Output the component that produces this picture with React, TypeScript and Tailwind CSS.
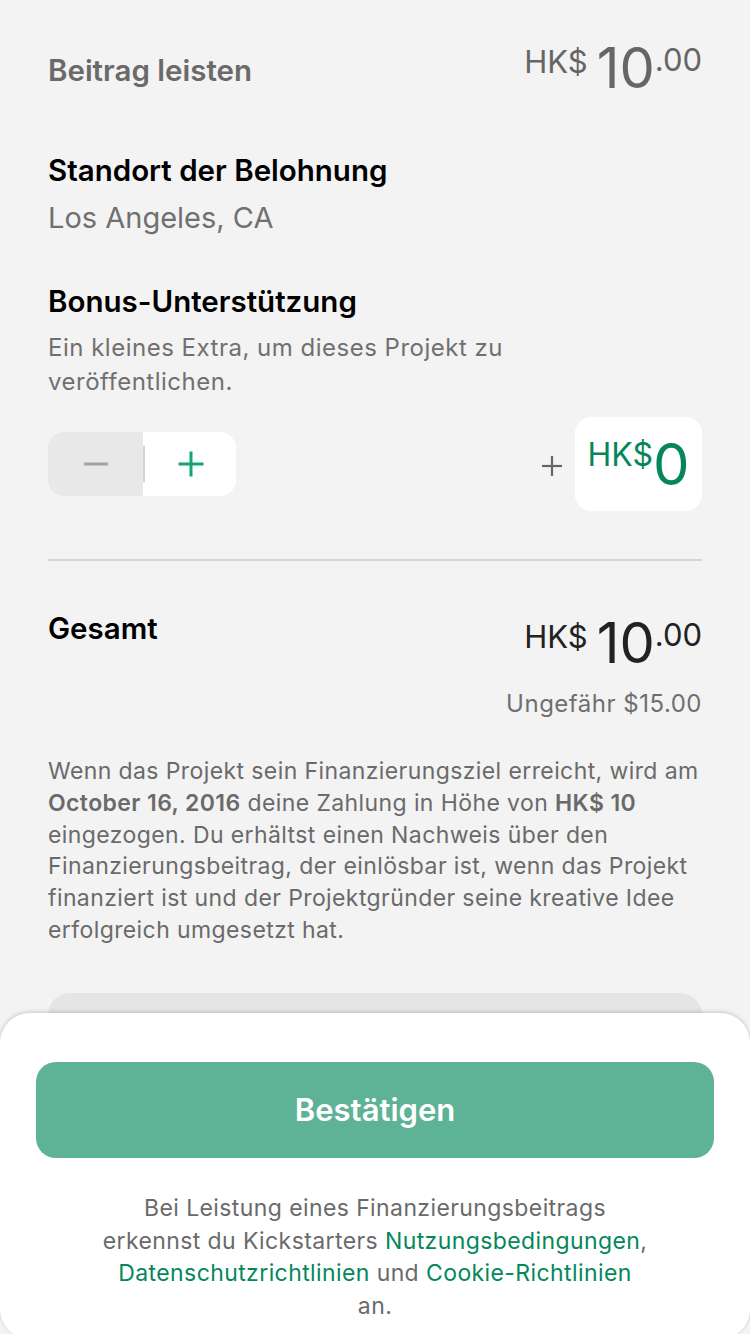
const sans = "font-['Inter','Liberation_Sans',sans-serif]";
const body = `${sans} text-[23px] tracking-[0.4px]`;

function Price({ className }: { className: string }) {
  return (
    <div className={`flex items-start ${sans} font-normal ${className}`}>
      <span className="mt-[6px] text-[31px] leading-none">HK$</span>
      <span className="ml-[9px] text-[56px] leading-none">10</span>
      <span className="mt-[4px] text-[31px] leading-none">.00</span>
    </div>
  );
}

export default function App() {
  return (
    <div className="relative h-[1334px] w-[750px] overflow-hidden bg-[#f3f3f3]">
      <div className="px-[48px] pt-[40px]">
        <div className="flex items-start justify-between">
          <h2 className={`${sans} mt-[12px] text-[29.5px] font-semibold leading-[36px] text-[#6a6a6a]`}>
            Beitrag leisten
          </h2>
          <Price className="text-[#666666]" />
        </div>

        <h3 className={`${sans} mt-[56px] text-[29.5px] font-semibold leading-[36px] text-black`}>
          Standort der Belohnung
        </h3>
        <p className={`${sans} mt-[12px] text-[29px] leading-[36px] text-[#707070]`}>Los Angeles, CA</p>

        <h3 className={`${sans} mt-[47px] text-[29.5px] font-semibold leading-[36px] text-black`}>
          Bonus-Unterstützung
        </h3>
        <p className={`${sans} mt-[12px] w-[520px] text-[24px] leading-[34px] tracking-[0.5px] text-[#707070]`}>
          Ein kleines Extra, um dieses Projekt zu veröffentlichen.
        </p>

        <div className="mt-[18px] flex items-center justify-between">
          <div className="flex h-[64px] w-[188px] overflow-hidden rounded-[16px]">
            <button className="flex w-[95px] items-center justify-center bg-[#e8e8e8]">
              <svg width="26" height="26" viewBox="0 0 26 26">
                <line x1="1" y1="13" x2="25" y2="13" stroke="#a3a3a3" strokeWidth="3" />
              </svg>
            </button>
            <div className="flex w-[93px] items-center justify-center bg-white">
              <div className="h-[36px] w-[2px] self-center bg-[#d3d3d3]" />
              <div className="flex flex-1 items-center justify-center">
                <svg width="26" height="26" viewBox="0 0 26 26">
                  <line x1="0.5" y1="13" x2="25.5" y2="13" stroke="#12a477" strokeWidth="3" />
                  <line x1="13" y1="0.5" x2="13" y2="25.5" stroke="#12a477" strokeWidth="3" />
                </svg>
              </div>
            </div>
          </div>
          <div className="flex items-center gap-[13px]">
            <svg width="20" height="20" viewBox="0 0 20 20" className="mt-[4px]">
              <line x1="0" y1="10" x2="20" y2="10" stroke="#666666" strokeWidth="2.2" />
              <line x1="10" y1="0" x2="10" y2="20" stroke="#666666" strokeWidth="2.2" />
            </svg>
            <div
              className={`flex h-[94px] w-[127px] items-start justify-center rounded-[16px] bg-white pt-[18px] ${sans} text-[#05875b]`}
            >
              <span className="mt-[4px] text-[32px] leading-none">HK$</span>
              <span className="text-[58px] leading-none">0</span>
            </div>
          </div>
        </div>

        <div className="mt-[48px] h-[2px] bg-[#d4d4d4]" />

        <div className="mt-[49px] flex items-start justify-between">
          <h3 className={`${sans} text-[29.5px] font-semibold leading-[36px] text-black`}>Gesamt</h3>
          <div className="mt-[5px]">
            <Price className="text-[#222222]" />
          </div>
        </div>
        <p className={`${sans} mt-[17px] text-right text-[24px] leading-[32px] tracking-[0.5px] text-[#6f6f6f]`}>
          Ungefähr $15.00
        </p>

        <p className={`${body} mt-[36px] leading-[31.8px] text-[#6a6a6a]`}>
          Wenn das Projekt sein Finanzierungsziel erreicht, wird am <b className="font-semibold">October 16, 2016</b>{" "}
          deine Zahlung in Höhe von <b className="font-semibold">HK$ 10</b> eingezogen. Du erhältst einen Nachweis über
          den Finanzierungsbeitrag, der einlösbar ist, wenn das Projekt finanziert ist und der Projektgründer seine
          kreative Idee erfolgreich umgesetzt hat.
        </p>

        <div className="mt-[46px] h-[80px] rounded-[22px] bg-[#e5e5e5]" />
      </div>

      <div className="absolute inset-x-0 top-[1013px] h-[326px] rounded-[30px] bg-white px-[36px] pt-[49px] shadow-[0_-1px_4px_rgba(0,0,0,0.18)]">
        <button
          className={`${sans} flex h-[96px] w-full items-center justify-center rounded-[20px] bg-[#5eb396] text-[31px] font-semibold text-white`}
        >
          Bestätigen
        </button>
        <p className={`${body} mt-[34px] text-center leading-[32.5px] text-[#6a6a6a]`}>
          Bei Leistung eines Finanzierungsbeitrags
          <br />
          erkennst du Kickstarters <span className="text-[#05875b]">Nutzungsbedingungen</span>,
          <br />
          <span className="text-[#05875b]">Datenschutzrichtlinien</span> und{" "}
          <span className="text-[#05875b]">Cookie-Richtlinien</span>
          <br />
          an.
        </p>
      </div>
    </div>
  );
}
